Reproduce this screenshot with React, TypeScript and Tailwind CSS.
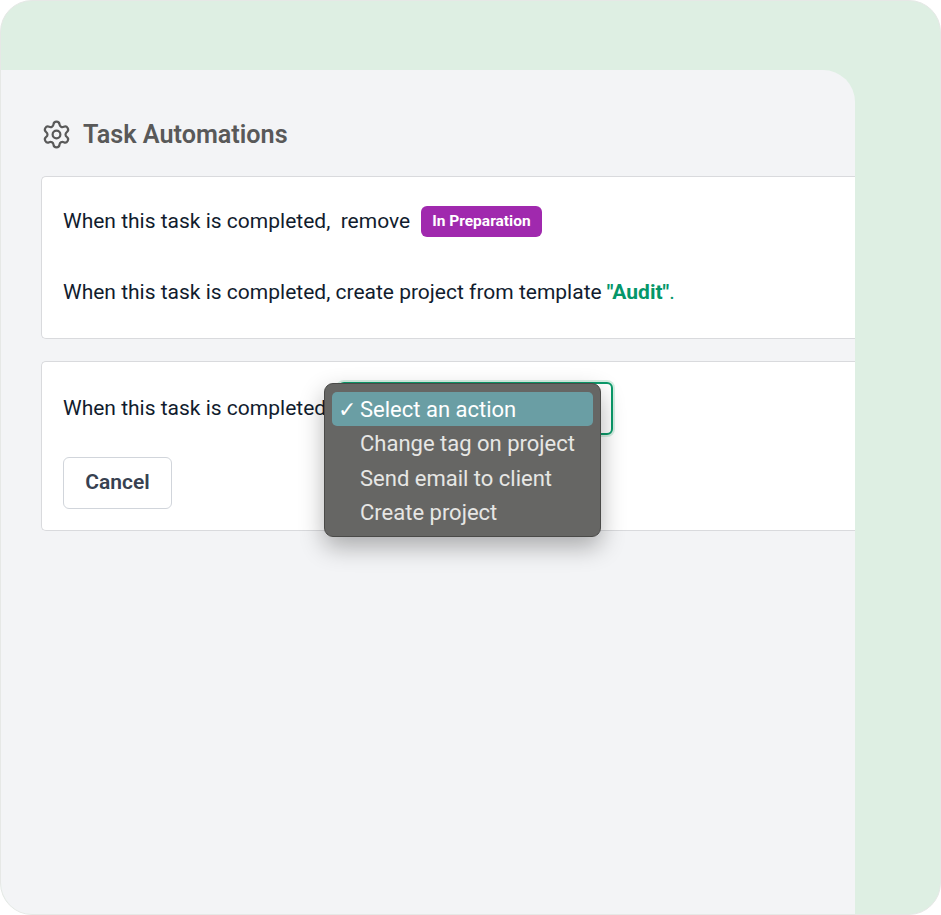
import React from 'react';
import { Settings } from 'lucide-react';

const options = ['Change tag on project', 'Send email to client', 'Create project'];

export default function App() {
  return (
    <div className="w-[941px] h-[915px] bg-white font-['Roboto',sans-serif]">
      <div className="w-full h-full rounded-[32px] bg-[#deefe3] border border-[#e6e8e6] overflow-hidden pt-[69px]">
        <div className="w-[854px] h-full bg-[#f3f4f6] rounded-tr-[32px] pl-10 overflow-hidden">
          {/* Header */}
          <div className="flex items-center gap-[11px] h-[32px] mt-[48px]">
            <Settings size={31} strokeWidth={1.7} className="text-[#595959]" />
            <h2 className="text-[25.2px] font-semibold text-[#595959] leading-[32px] pt-[1px]">Task Automations</h2>
          </div>

          {/* Existing automations */}
          <div className="mt-[26px] bg-white border border-[#d9dadd] border-r-0 rounded-l-[5px] h-[163px] pl-[21px] pt-[28px] text-[21px] leading-[30px] text-[#111c2e]">
            <div className="flex items-center h-[32px] whitespace-pre">
              <span>When this task is completed,  remove</span>
              <span className="ml-[11px] h-[31px] px-[11px] rounded-[6px] bg-[#a029ae] text-white text-[15.5px] font-bold flex items-center">
                In Preparation
              </span>
            </div>
            <p className="mt-[40px]">
              When this task is completed, create project from template{' '}
              <span className="font-bold text-[#059669]">"Audit"</span>
              <span className="text-[#059669]">.</span>
            </p>
          </div>

          {/* New automation */}
          <div className="mt-[22px] bg-white border border-[#d9dadd] border-r-0 rounded-l-[5px] h-[170px] pl-[21px] pt-[20px] text-[21px] text-[#111c2e]">
            <div className="relative flex items-center h-[53px]">
              <span>When this task is completed</span>
              <div className="absolute left-[275px] top-0 w-[275px] h-[53px] rounded-[6px] border-2 border-[#0b9a6a] bg-white shadow-[0_0_0_2px_#d6efe3]" />

              {/* Open select menu */}
              <div className="absolute left-[261px] top-[1px] w-[277px] h-[154px] rounded-[9px] bg-[#666664] border border-[#4a4a48] px-[7px] pt-[8px] shadow-[0_10px_24px_rgba(0,0,0,0.3)] text-[22px] leading-[34.5px] text-[#e6e6e4] z-10">
                <div className="relative h-[34px] rounded-[5px] bg-[#6a9ea4] pl-[28px] text-white leading-[36px]">
                  <span className="absolute left-[6px] top-0">✓</span>
                  Select an action
                </div>
                <div className="mt-[1px]">
                  {options.map((option) => (
                    <div key={option} className="pl-[28px]">
                      {option}
                    </div>
                  ))}
                </div>
              </div>
            </div>

            <button className="mt-[22px] w-[109px] h-[52px] rounded-[6px] border border-[#d1d5db] bg-white text-[#374151] text-[21px] font-semibold">
              Cancel
            </button>
          </div>
        </div>
      </div>
    </div>
  );
}
